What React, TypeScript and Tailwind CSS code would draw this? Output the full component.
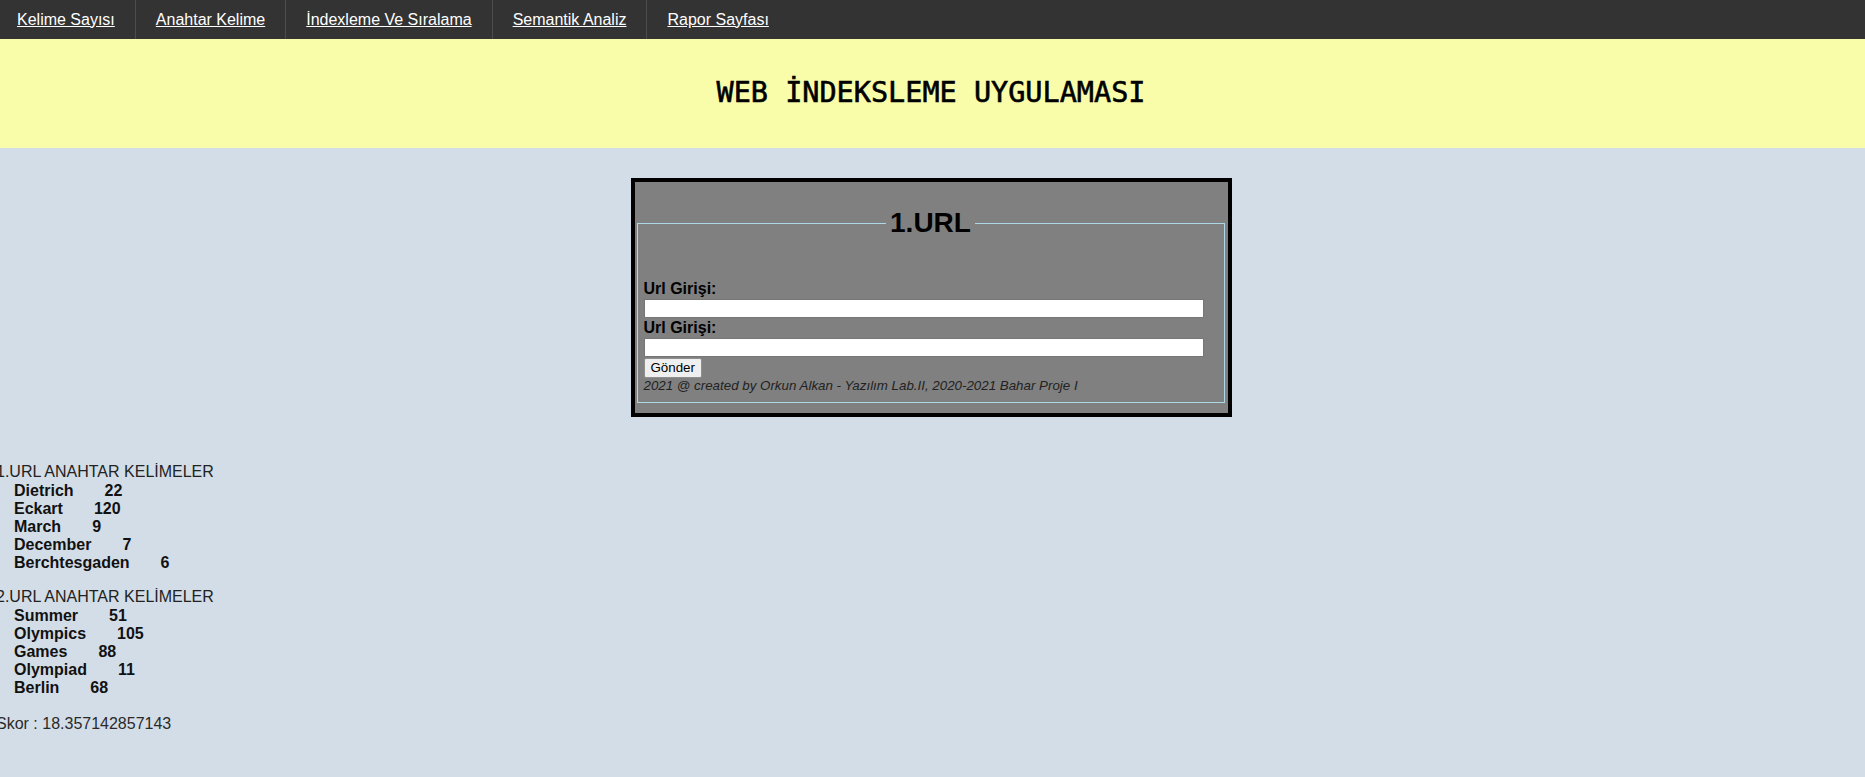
import React from "react";

const navItems = [
  "Kelime Sayısı",
  "Anahtar Kelime",
  "İndexleme Ve Sıralama",
  "Semantik Analiz",
  "Rapor Sayfası",
];

type Keyword = { word: string; count: number };

const url1Keywords: Keyword[] = [
  { word: "Dietrich", count: 22 },
  { word: "Eckart", count: 120 },
  { word: "March", count: 9 },
  { word: "December", count: 7 },
  { word: "Berchtesgaden", count: 6 },
];

const url2Keywords: Keyword[] = [
  { word: "Summer", count: 51 },
  { word: "Olympics", count: 105 },
  { word: "Games", count: 88 },
  { word: "Olympiad", count: 11 },
  { word: "Berlin", count: 68 },
];

const KeywordBlock: React.FC<{ title: string; items: Keyword[] }> = ({
  title,
  items,
}) => (
  <div>
    <div className="mb-[1px] leading-[18px] text-[#222]">{title}</div>
    {items.map((k) => (
      <div key={k.word} className="pl-[18px] font-bold leading-[18px] text-[#111]">
        {k.word}
        <span className="ml-[31px]">{k.count}</span>
      </div>
    ))}
  </div>
);

export default function App() {
  return (
    <div className="min-h-screen bg-[#d3dde7] font-['Liberation_Sans',Arial,sans-serif] text-[16px]">
      {/* top menu */}
      <nav className="-ml-[3px] flex h-[39px] bg-[#333333]">
        {navItems.map((item, i) => (
          <a
            key={item}
            href="#"
            className={`flex items-center px-[20px] text-white underline ${
              i < navItems.length - 1 ? "border-r border-[#4d4d4d]" : ""
            }`}
          >
            {item}
          </a>
        ))}
      </nav>

      {/* header */}
      <header className="flex h-[109px] items-center justify-center bg-[#f9fdaa] pr-[3px]">
        <h1 className="font-['DejaVu_Sans_Mono',monospace] text-[28.5px] leading-none text-black [-webkit-text-stroke:0.6px_black]">
          WEB İNDEKSLEME UYGULAMASI
        </h1>
      </header>

      {/* url form */}
      <div className="pt-[30px] pr-[3px]">
        <form className="mx-auto w-[601px] border-4 border-black bg-[#808080] pt-[25px] pr-[3px] pb-[10px] pl-[2px]">
          <fieldset className="border border-[#add8e6] px-[6px] pb-[9px]">
            <legend className="mx-auto px-[4px] text-[28px] font-bold leading-[32px] text-black">
              1.URL
            </legend>
            <label className="mt-[40px] block h-[20px] font-bold leading-[20px] text-black">
              Url Girişi:
            </label>
            <input
              type="text"
              className="block h-[19px] w-[560px] border border-[#767676] bg-white"
            />
            <label className="block h-[20px] font-bold leading-[20px] text-black">
              Url Girişi:
            </label>
            <input
              type="text"
              className="block h-[19px] w-[560px] border border-[#767676] bg-white"
            />
            <button
              type="button"
              className="mt-[1px] block h-[20px] rounded-[2px] border border-[#8f8f8f] bg-[#efefef] px-[6px] text-[13.33px] leading-none text-black"
            >
              Gönder
            </button>
            <div className="text-[13.33px] italic leading-[15.3px] text-[#222]">
              2021 @ created by Orkun Alkan - Yazılım Lab.II, 2020-2021 Bahar
              Proje I
            </div>
          </fieldset>
        </form>
      </div>

      {/* keyword results */}
      <section className="-ml-[4px] mt-[46px] pb-[40px]">
        <KeywordBlock title="1.URL ANAHTAR KELİMELER" items={url1Keywords} />
        <div className="mt-[16px]">
          <KeywordBlock title="2.URL ANAHTAR KELİMELER" items={url2Keywords} />
        </div>
        <div className="mt-[18px] leading-[18px] text-[#2a2a2a]">
          Skor : 18.357142857143
        </div>
      </section>
    </div>
  );
}
